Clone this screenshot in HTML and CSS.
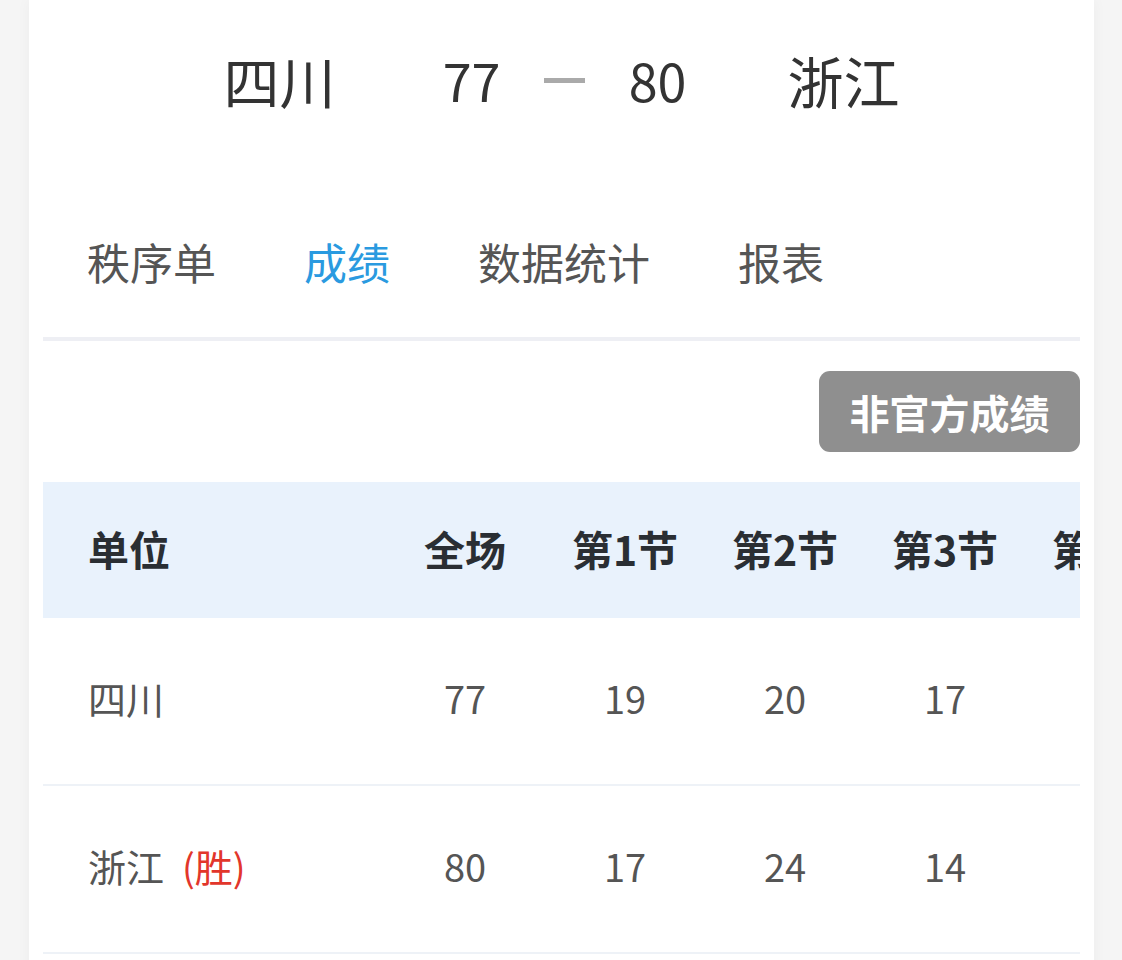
FILE: index.html
```html
<!DOCTYPE html>
<html lang="zh">
<head>
<meta charset="utf-8">
<title>比赛成绩</title>
<link rel="stylesheet" href="styles.css">
</head>
<body>
<div class="page">
  <div class="card">
    <div class="match">
      <span class="team team-home">四川</span>
      <span class="score score-home">77</span>
      <span class="dash-box"><span class="dash"></span></span>
      <span class="score score-away">80</span>
      <span class="team team-away">浙江</span>
    </div>

    <nav class="tabs">
      <span class="tab">秩序单</span>
      <span class="tab active">成绩</span>
      <span class="tab">数据统计</span>
      <span class="tab">报表</span>
    </nav>
    <div class="divider"></div>

    <div class="actions">
      <span class="badge">非官方成绩</span>
    </div>

    <div class="table-wrap">
      <div class="grid head">
        <div class="cell first">单位</div>
        <div class="cell">全场</div>
        <div class="cell">第1节</div>
        <div class="cell">第2节</div>
        <div class="cell">第3节</div>
        <div class="cell">第4节</div>
      </div>
      <div class="grid row">
        <div class="cell first">四川</div>
        <div class="cell">77</div>
        <div class="cell">19</div>
        <div class="cell">20</div>
        <div class="cell">17</div>
        <div class="cell"></div>
      </div>
      <div class="grid row">
        <div class="cell first">浙江<span class="win">(胜)</span></div>
        <div class="cell">80</div>
        <div class="cell">17</div>
        <div class="cell">24</div>
        <div class="cell">14</div>
        <div class="cell"></div>
      </div>
    </div>
  </div>
</div>
</body>
</html>
```

FILE: styles.css
```css
html, body {
  margin: 0;
  padding: 0;
  height: 100%;
  overflow: hidden;
}

body {
  background: #f5f5f5;
  font-family: "Noto Sans CJK SC", "Noto Sans", sans-serif;
}

.page {
  display: flex;
  padding-left: 29px;
}

.card {
  width: 1065px;
  min-height: 1000px;
  background: #ffffff;
  box-sizing: border-box;
  padding: 0 14px;
  box-shadow: 0 0 14px rgba(0, 0, 0, 0.04);
}

/* match header */
.match {
  height: 160px;
  padding-bottom: 4px;
  display: flex;
  align-items: center;
  justify-content: center;
  color: #333333;
}

.team {
  font-size: 56px;
  line-height: 1;
  font-weight: 400;
}

.score {
  font-size: 52px;
  line-height: 1;
  width: 104px;
  text-align: center;
}

.score-home {
  margin-left: 84px;
}

.score-away {
  margin-right: 78px;
}

.dash-box {
  width: 82px;
  display: flex;
  justify-content: center;
}

.dash {
  display: block;
  width: 41px;
  height: 5px;
  background: #aaaaaa;
}

/* tabs */
.tabs {
  display: flex;
  gap: 88px;
  padding: 67px 0 46px 44px;
}

.tab {
  font-size: 43px;
  line-height: 60px;
  color: #555555;
}

.tab.active {
  color: #2a9ae0;
}

.divider {
  height: 4px;
  background: #eeeff4;
}

/* badge */
.actions {
  display: flex;
  justify-content: flex-end;
  padding-top: 30px;
}

.badge {
  display: flex;
  align-items: center;
  justify-content: center;
  width: 261px;
  height: 81px;
  border-radius: 11px;
  background: #8f8f8f;
  color: #ffffff;
  font-size: 40px;
  font-weight: 700;
}

/* table */
.table-wrap {
  margin-top: 30px;
  overflow: hidden;
}

.grid {
  display: grid;
  grid-template-columns: 342px repeat(5, 160px);
  align-items: center;
}

.cell {
  text-align: center;
  white-space: nowrap;
}

.cell.first {
  text-align: left;
  padding-left: 45px;
}

.head {
  height: 132px;
  padding-bottom: 4px;
  background: #e9f2fc;
  color: #2a2e33;
  font-size: 41px;
  font-weight: 700;
}

.row {
  height: 158px;
  padding-bottom: 8px;
  border-bottom: 2px solid #eef2f7;
  color: #555555;
  font-size: 38px;
}

.win {
  color: #e2362b;
  margin-left: 18px;
}
```
